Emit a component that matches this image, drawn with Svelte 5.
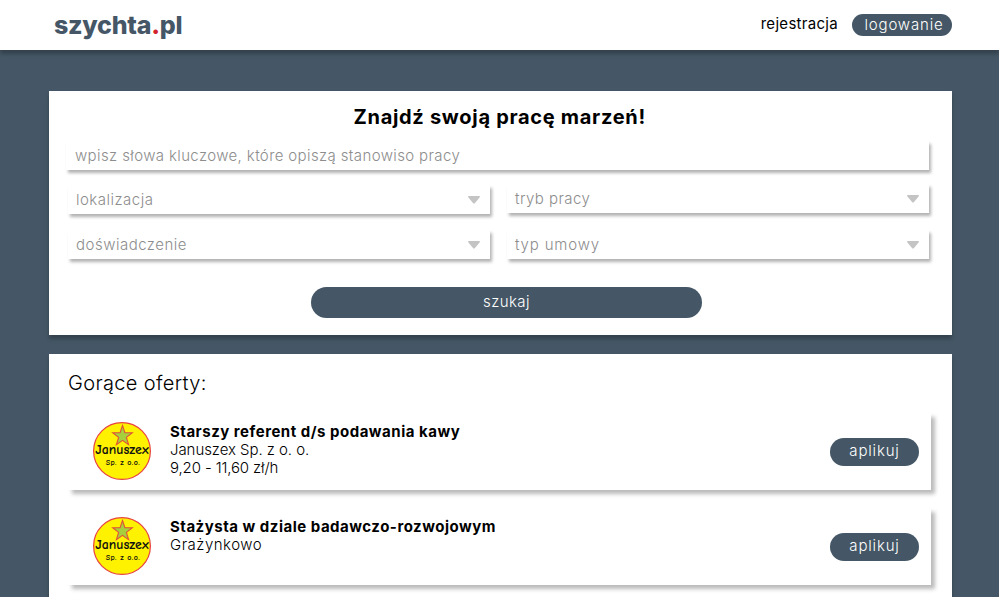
<script>
  const selects = [
    { label: 'lokalizacja', spacing: 0.48 },
    { label: 'tryb pracy', spacing: 0.45, raised: true },
    { label: 'doświadczenie', spacing: 0.5 },
    { label: 'typ umowy', spacing: 0.82 }
  ];
  const offers = [
    {
      title: 'Starszy referent d/s podawania kawy',
      lines: [
        { text: 'Januszex Sp. z o. o.', spacing: -0.06 },
        { text: '9,20 - 11,60 zł/h', spacing: -0.131 }
      ]
    },
    {
      title: 'Stażysta w dziale badawczo-rozwojowym',
      lines: [{ text: 'Grażynkowo', spacing: 0.5 }]
    }
  ];
</script>

{#snippet companyLogo()}
  <svg class="company" width="60" height="60" viewBox="0 0 60 60">
    <circle cx="30" cy="30" r="28.4" fill="#fff200" stroke="#e8433f" stroke-width="1.2" />
    <path
      d="M30.5 4.5 L32.9 11.7 L40.3 11.8 L34.4 16.4 L36.6 23.7 L30.5 19.4 L24.4 23.7 L26.6 16.4 L20.7 11.8 L28.1 11.7 Z"
      fill="#a5cf3c"
      stroke="#e0503a"
      stroke-width="1.1"
    />
    <text class="comic" x="3.2" y="32.8" font-size="13.5" textLength="53.5" lengthAdjust="spacingAndGlyphs">Januszex</text>
    <text class="comic" x="13.7" y="43.8" font-size="8" textLength="34" lengthAdjust="spacing">Sp. z o.o.</text>
  </svg>
{/snippet}

<div class="page">
  <header>
    <div class="brand">szychta<span>.</span>pl</div>
    <nav>
      <a class="register" href="#rejestracja">rejestracja</a>
      <a class="login" href="#logowanie">logowanie</a>
    </nav>
  </header>

  <main>
    <section class="search">
      <h1>Znajdź swoją pracę marzeń!</h1>
      <div class="field keywords">wpisz słowa kluczowe, które opiszą stanowiso pracy</div>
      <div class="filters">
        {#each selects as s}
          <div class="field select" class:raised={s.raised}>
            <span style:letter-spacing="{s.spacing}px">{s.label}</span>
            <svg width="12" height="8" viewBox="0 0 12 8">
              <path d="M0.4 0 H11.6 Q12.2 0.8 11.6 1.5 L7 7 Q6 8 5 7 L0.4 1.5 Q-0.2 0.8 0.4 0 Z" fill="#c4c4c4" />
            </svg>
          </div>
        {/each}
      </div>
      <button class="submit">szukaj</button>
    </section>

    <section class="offers">
      <h2>Gorące oferty:</h2>
      {#each offers as offer}
        <article>
          {@render companyLogo()}
          <div class="details">
            <h3>{offer.title}</h3>
            {#each offer.lines as line}
              <p style:letter-spacing="{line.spacing}px">{line.text}</p>
            {/each}
          </div>
          <button class="apply">aplikuj</button>
        </article>
      {/each}
    </section>
  </main>
</div>

<style>
  :global(body) {
    background: #455766;
  }
  .page {
    height: 597px;
    overflow: hidden;
    background: #455766;
    color: #000;
    font: 300 15px/18px Inter, 'Open Sans', sans-serif;
  }
  .page * {
    box-sizing: border-box;
  }
  h1, h2, h3, p {
    margin: 0;
  }
  button {
    border: 0;
    padding: 0;
    background: #455766;
    color: #fff;
    font: inherit;
  }
  header {
    display: flex;
    justify-content: space-between;
    height: 50px;
    padding: 0 47px 0 54px;
    background: #fff;
    box-shadow: 0 4px 4px rgba(0, 0, 0, 0.25);
  }
  .brand {
    color: #455766;
    font-size: 25px;
    font-weight: 800;
    line-height: 51px;
    letter-spacing: -0.26px;
  }
  .brand span {
    color: #d2232a;
  }
  nav {
    display: flex;
    align-items: flex-start;
    gap: 14px;
    padding-top: 14px;
  }
  nav a {
    color: #000;
    text-decoration: none;
  }
  .register {
    font-weight: 400;
    line-height: 19px;
    letter-spacing: 0.3px;
  }
  nav .login {
    width: 100px;
    height: 22px;
    padding-left: 12.5px;
    border-radius: 11px;
    background: #455766;
    color: #fff;
    line-height: 22px;
    letter-spacing: 0.83px;
  }
  main {
    display: flex;
    flex-direction: column;
    gap: 19px;
    width: 903px;
    margin: 41px 0 0 49px;
  }
  section {
    background: #fff;
    box-shadow: 0 4px 4px rgba(0, 0, 0, 0.25);
  }
  .search {
    display: flex;
    flex-direction: column;
    height: 244px;
    padding: 0 23px 0 17px;
  }
  h1 {
    height: 50px;
    padding-left: 287.5px;
    font-size: 20px;
    font-weight: 700;
    line-height: 52px;
    letter-spacing: 0.7px;
    white-space: nowrap;
  }
  .field {
    height: 29px;
    color: #8d8d8d;
    line-height: 29px;
    box-shadow: 2px 3px 3px rgba(0, 0, 0, 0.3);
  }
  .keywords {
    padding-left: 9px;
    letter-spacing: 0.38px;
  }
  .filters {
    display: grid;
    grid-template-columns: 422px 422px;
    justify-content: end;
    gap: 16px 17px;
    margin-top: 15px;
  }
  .select {
    display: flex;
    justify-content: space-between;
    align-items: center;
    padding: 0 10px 0 8px;
  }
  .raised {
    margin-top: -1px;
  }
  .submit {
    width: 391px;
    height: 31px;
    margin: 28px 0 0 245px;
    padding-bottom: 2px;
    border-radius: 15.5px;
    line-height: 29px;
    letter-spacing: 0.425px;
  }
  .offers {
    height: 300px;
    padding: 0 21px 0 19px;
  }
  h2 {
    height: 59px;
    font-size: 20px;
    font-weight: 300;
    line-height: 58px;
    letter-spacing: 0.35px;
  }
  article {
    display: flex;
    height: 77px;
    margin-bottom: 18px;
    padding: 0 12px 0 24px;
    background: #fff;
    box-shadow: 4px 4px 4px rgba(0, 0, 0, 0.27);
  }
  .company {
    margin-top: 8px;
    flex: none;
  }
  .comic {
    font-family: 'Comic Sans MS', 'Comic Neue', 'DejaVu Sans', sans-serif;
    font-weight: 700;
    fill: #111;
  }
  .details {
    flex: 1;
    padding: 10px 0 0 18px;
  }
  h3 {
    font-size: 15px;
    font-weight: 700;
    line-height: 18px;
    letter-spacing: 0.508px;
  }
  .apply {
    width: 89px;
    height: 28px;
    margin-top: 25px;
    padding-bottom: 2px;
    border-radius: 14px;
    line-height: 26px;
    letter-spacing: 0.828px;
  }
</style>
